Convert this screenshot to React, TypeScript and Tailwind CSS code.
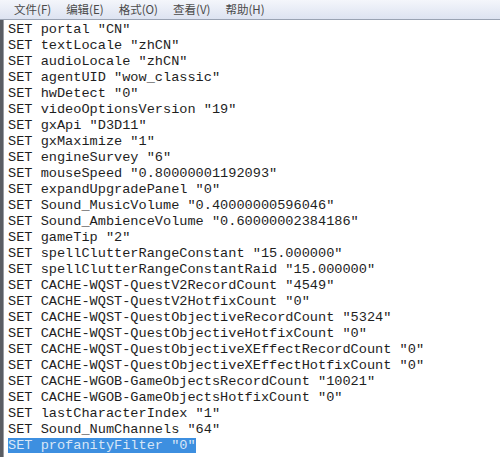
const menus = ['文件(F)', '编辑(E)', '格式(O)', '查看(V)', '帮助(H)']

const lines = [
  'SET portal "CN"',
  'SET textLocale "zhCN"',
  'SET audioLocale "zhCN"',
  'SET agentUID "wow_classic"',
  'SET hwDetect "0"',
  'SET videoOptionsVersion "19"',
  'SET gxApi "D3D11"',
  'SET gxMaximize "1"',
  'SET engineSurvey "6"',
  'SET mouseSpeed "0.80000001192093"',
  'SET expandUpgradePanel "0"',
  'SET Sound_MusicVolume "0.40000000596046"',
  'SET Sound_AmbienceVolume "0.60000002384186"',
  'SET gameTip "2"',
  'SET spellClutterRangeConstant "15.000000"',
  'SET spellClutterRangeConstantRaid "15.000000"',
  'SET CACHE-WQST-QuestV2RecordCount "4549"',
  'SET CACHE-WQST-QuestV2HotfixCount "0"',
  'SET CACHE-WQST-QuestObjectiveRecordCount "5324"',
  'SET CACHE-WQST-QuestObjectiveHotfixCount "0"',
  'SET CACHE-WQST-QuestObjectiveXEffectRecordCount "0"',
  'SET CACHE-WQST-QuestObjectiveXEffectHotfixCount "0"',
  'SET CACHE-WGOB-GameObjectsRecordCount "10021"',
  'SET CACHE-WGOB-GameObjectsHotfixCount "0"',
  'SET lastCharacterIndex "1"',
  'SET Sound_NumChannels "64"',
]

export default function App() {
  return (
    <div className="w-[500px] h-[475px] bg-white overflow-hidden">
      <div className="h-[20px] flex items-center gap-[14px] pl-[14px] bg-gradient-to-b from-[#f4f6fb] to-[#dde3f1] border-b border-[#9aa3b3] text-[11.5px] text-[#4a4a4a] font-[Noto_Sans_CJK_SC,sans-serif]">
        {menus.map((m) => (
          <span key={m} className="pr-[1px]">{m}</span>
        ))}
      </div>
      <div className="flex h-[437px]">
        <div className="w-[4px] bg-[#5a5d63] border-r border-[#9a9da3]" />
        <div className="pl-[4px] pt-[2px] font-[Liberation_Mono,monospace] text-[13.6px] leading-[16px] text-[#1e1e1e] whitespace-pre">
          {lines.map((l) => (
            <div key={l}>{l}</div>
          ))}
          <div>
            <span className="bg-[#3d8fe0] text-[#d8e6f6]">SET profanityFilter "0"</span>
          </div>
        </div>
      </div>
    </div>
  )
}
